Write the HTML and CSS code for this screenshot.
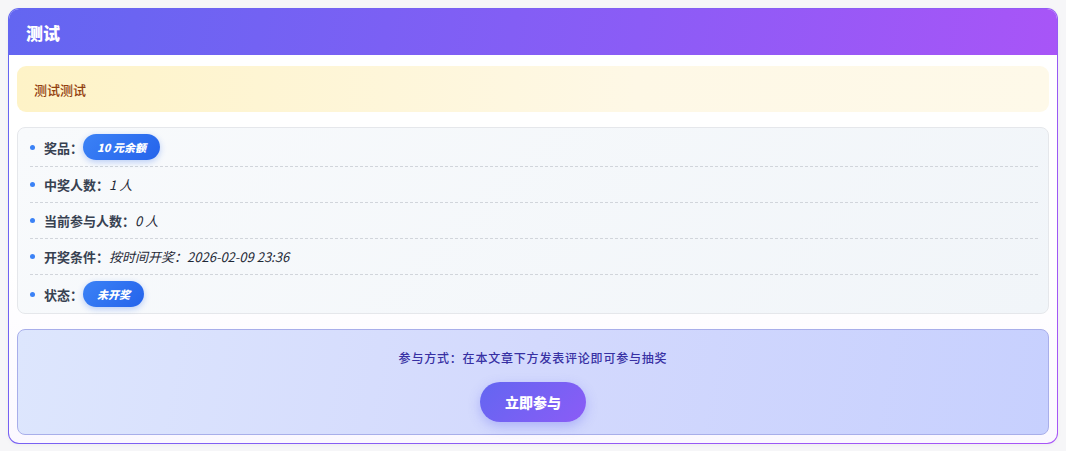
FILE: index.html
```html
<!DOCTYPE html>
<html lang="zh-CN">
<head>
<meta charset="utf-8">
<title>测试</title>
<link rel="stylesheet" href="styles.css">
</head>
<body>
<div class="card">
  <div class="card-header">测试</div>
  <div class="card-body">
    <div class="notice">测试测试</div>
    <ul class="info">
      <li class="row"><span class="dot"></span><span class="label">奖品：</span><span class="badge">10 元余额</span></li>
      <li class="row"><span class="dot"></span><span class="label">中奖人数：</span><span class="value">1 人</span></li>
      <li class="row"><span class="dot"></span><span class="label">当前参与人数：</span><span class="value">0 人</span></li>
      <li class="row"><span class="dot"></span><span class="label">开奖条件：</span><span class="value">按时间开奖：2026-02-09 23:36</span></li>
      <li class="row"><span class="dot"></span><span class="label">状态：</span><span class="badge">未开奖</span></li>
    </ul>
    <div class="join">
      <div class="join-text">参与方式：在本文章下方发表评论即可参与抽奖</div>
      <button class="join-btn">立即参与</button>
    </div>
  </div>
</div>
</body>
</html>
```

FILE: styles.css
```css
html, body {
  margin: 0;
  padding: 0;
}
body {
  background: #f6f6f8;
  padding: 8px;
  font-family: "Noto Sans CJK SC", "Noto Sans", sans-serif;
}
.card {
  height: 436px;
  box-sizing: border-box;
  border: 1px solid transparent;
  border-radius: 11px;
  background:
    linear-gradient(180deg, #ffffff 0%, #ffffff 60%, #fbf8ff 100%) padding-box,
    linear-gradient(135deg, #6366f1 0%, #a855f7 100%) border-box;
  overflow: hidden;
  display: flex;
  flex-direction: column;
  box-shadow: 0 1px 4px rgba(0,0,0,0.04);
}
.card-header {
  height: 46px;
  box-sizing: border-box;
  padding: 0 17px;
  display: flex;
  align-items: center;
  background: linear-gradient(100deg, #6366f1 0%, #8b5cf6 60%, #a855f7 100%);
  color: #fff;
  font-size: 17px;
  font-weight: 800;
}
.card-body {
  padding: 11px 8px 8px;
  display: flex;
  flex-direction: column;
  gap: 15px;
}
.notice {
  height: 46px;
  box-sizing: border-box;
  padding: 0 17px;
  display: flex;
  align-items: center;
  border-radius: 9px;
  background: linear-gradient(90deg, #fef3c7 0%, #fef8e6 60%, #fef9e9 100%);
  color: #92400e;
  font-size: 13px;
  font-weight: 500;
}
.info {
  list-style: none;
  margin: 0;
  padding: 0 10px 0 12px;
  border: 1px solid #e5e7eb;
  border-radius: 8px;
  background: linear-gradient(135deg, #f8fafc 0%, #f1f5f9 100%);
}
.row {
  display: flex;
  align-items: center;
  min-height: 23px;
  padding: 6px 0;
  border-bottom: 1px dashed #d1d5db;
  font-size: 13px;
  color: #374151;
}
.row:last-child {
  border-bottom: none;
}
.dot {
  width: 5px;
  height: 5px;
  border-radius: 50%;
  background: #3b82f6;
  margin: 0 9px 0 0;
  flex: none;
}
.label {
  font-weight: 700;
  color: #374151;
}
.value {
  font-style: italic;
  color: #1f2937;
}
.badge {
  display: inline-flex;
  align-items: center;
  height: 26px;
  box-sizing: border-box;
  padding: 0 14px;
  border-radius: 13px;
  background: linear-gradient(135deg, #3b82f6 0%, #2563eb 100%);
  color: #fff;
  font-size: 11px;
  font-weight: 800;
  font-style: italic;
  box-shadow: 0 2px 6px rgba(37, 99, 235, 0.3);
}
.join {
  height: 106px;
  box-sizing: border-box;
  padding: 18px 0 0;
  border: 1px solid #a8aeea;
  border-radius: 8px;
  background: linear-gradient(100deg, #dde6fd 0%, #d3d9fd 50%, #c7d0fe 100%);
  display: flex;
  flex-direction: column;
  align-items: center;
}
.join-text {
  font-size: 12px;
  line-height: 20px;
  letter-spacing: 0.8px;
  font-weight: 500;
  color: #3730a3;
}
.join-btn {
  margin-top: 14px;
  height: 40px;
  width: 106px;
  border: none;
  border-radius: 20px;
  background: linear-gradient(135deg, #6366f1 0%, #8b5cf6 100%);
  color: #fff;
  font-family: inherit;
  font-size: 14px;
  font-weight: 800;
  box-shadow: 0 4px 12px rgba(99, 102, 241, 0.35);
  cursor: pointer;
}
```
